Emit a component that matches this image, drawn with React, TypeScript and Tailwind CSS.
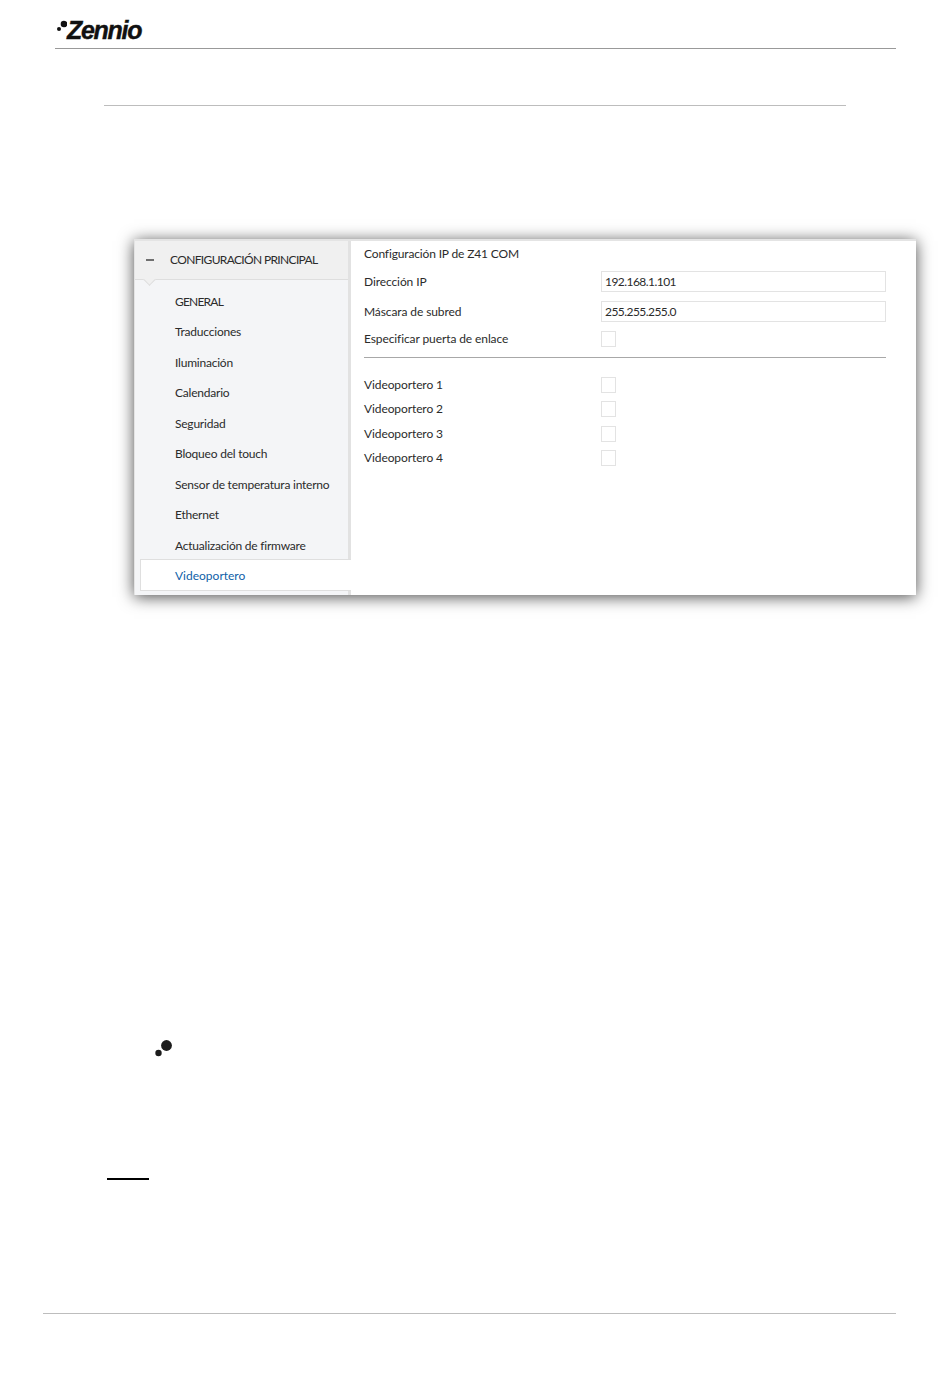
const font = { fontFamily: 'Lato, sans-serif' };

const menuItems = [
  'GENERAL',
  'Traducciones',
  'Iluminación',
  'Calendario',
  'Seguridad',
  'Bloqueo del touch',
  'Sensor de temperatura interno',
  'Ethernet',
  'Actualización de firmware',
];

function Checkbox() {
  return <div className="h-[16px] w-[15px] border border-[#e3e3e3] bg-white" />;
}

function Row({ label, className, children }: { label: string; className: string; children: React.ReactNode }) {
  return (
    <div className={`flex items-center ${className}`}>
      <span className="w-[237px] shrink-0 tracking-[-0.1px]">{label}</span>
      {children}
    </div>
  );
}

function TextValue({ value }: { value: string }) {
  return (
    <div className="flex h-[21px] w-[285px] items-center border border-[#e3e3e3] bg-white pl-[3px] tracking-[-0.55px]">
      {value}
    </div>
  );
}

function Sidebar() {
  return (
    <div className="flex w-[216px] shrink-0 flex-col border-r-[3px] border-r-[#e2e2e2] bg-[#f4f5f7]">
      <div className="relative flex h-[39px] items-center border-b border-b-[#dedede] bg-[#f0f0f0] pl-[11px]">
        <div className="h-[2px] w-[8px] bg-[#6f6f6f]" />
        <span className="ml-[16px] tracking-[-0.65px]">CONFIGURACIÓN PRINCIPAL</span>
        <div className="absolute bottom-[-5px] left-[10px] h-[9px] w-[9px] rotate-45 border-r border-b border-[#dedede] bg-[#f0f0f0]" />
      </div>
      <div className="flex flex-col pt-[6.5px]">
        {menuItems.map((item) => (
          <div
            key={item}
            className={`flex h-[30.5px] items-center pl-[40px] ${item === 'GENERAL' ? 'tracking-[-0.8px]' : 'tracking-[-0.22px]'}`}
          >
            {item}
          </div>
        ))}
      </div>
      <div className="ml-[5px] mr-[-3px] mt-[-2px] flex h-[32px] items-center border border-r-0 border-[#dfdfdf] bg-white pl-[34px] pt-[1px] text-[#0f5fa8]">
        Videoportero
      </div>
    </div>
  );
}

function Panel() {
  return (
    <div className="flex flex-1 flex-col pl-[13px] pr-[30px]">
      <div className="flex h-[26px] items-center tracking-[-0.15px]">Configuración IP de Z41 COM</div>
      <Row label="Dirección IP" className="h-[29px]">
        <TextValue value="192.168.1.101" />
      </Row>
      <Row label="Máscara de subred" className="h-[31px]">
        <TextValue value="255.255.255.0" />
      </Row>
      <Row label="Especificar puerta de enlace" className="h-[24px]">
        <Checkbox />
      </Row>
      <div className="mt-[6px] h-px bg-[#a8a8a8]" />
      <div className="mt-[14.5px] flex flex-col">
        {[1, 2, 3, 4].map((n) => (
          <Row key={n} label={`Videoportero ${n}`} className="h-[24.5px]">
            <Checkbox />
          </Row>
        ))}
      </div>
    </div>
  );
}

export default function App() {
  return (
    <div className="flex h-[1378px] w-[950px] flex-col overflow-hidden bg-white text-[12px] text-[#2b2b2b]" style={font}>
      <header className="ml-[55px] mr-[54px] flex h-[49px] items-end border-b border-b-[#999999] pb-[4px] pl-[1px]">
        <svg width="11" height="14" viewBox="0 0 11 14" className="mb-[10px]">
          <circle cx="8" cy="4" r="3.3" fill="#111" />
          <circle cx="3" cy="9" r="2" fill="#111" />
        </svg>
        <span
          className="text-[25px] leading-[28px] font-bold tracking-[-1.3px] text-[#111] italic [-webkit-text-stroke:0.4px_#111]"
          style={{ fontFamily: '"Liberation Sans", sans-serif' }}
        >
          Zennio
        </span>
      </header>

      <div className="ml-[104px] mr-[104px] mt-[56px] h-px bg-[#bdbdbd]" />

      <div className="ml-[134px] mt-[133px] flex h-[356px] w-[782px] border-t-2 border-l border-[#e4e4e4] bg-white shadow-[0_2px_15px_rgba(0,0,0,0.7)]">
        <Sidebar />
        <Panel />
      </div>

      <svg width="18" height="17" viewBox="0 0 18 17" className="ml-[155px] mt-[445px]">
        <circle cx="11.5" cy="5.5" r="5.4" fill="#1c1c1c" />
        <circle cx="3.5" cy="13" r="3.2" fill="#1c1c1c" />
      </svg>

      <div className="ml-[107px] mt-[121px] h-[2px] w-[42px] bg-black" />

      <div className="ml-[43px] mr-[54px] mt-[133px] h-px bg-[#bdbdbd]" />
    </div>
  );
}
